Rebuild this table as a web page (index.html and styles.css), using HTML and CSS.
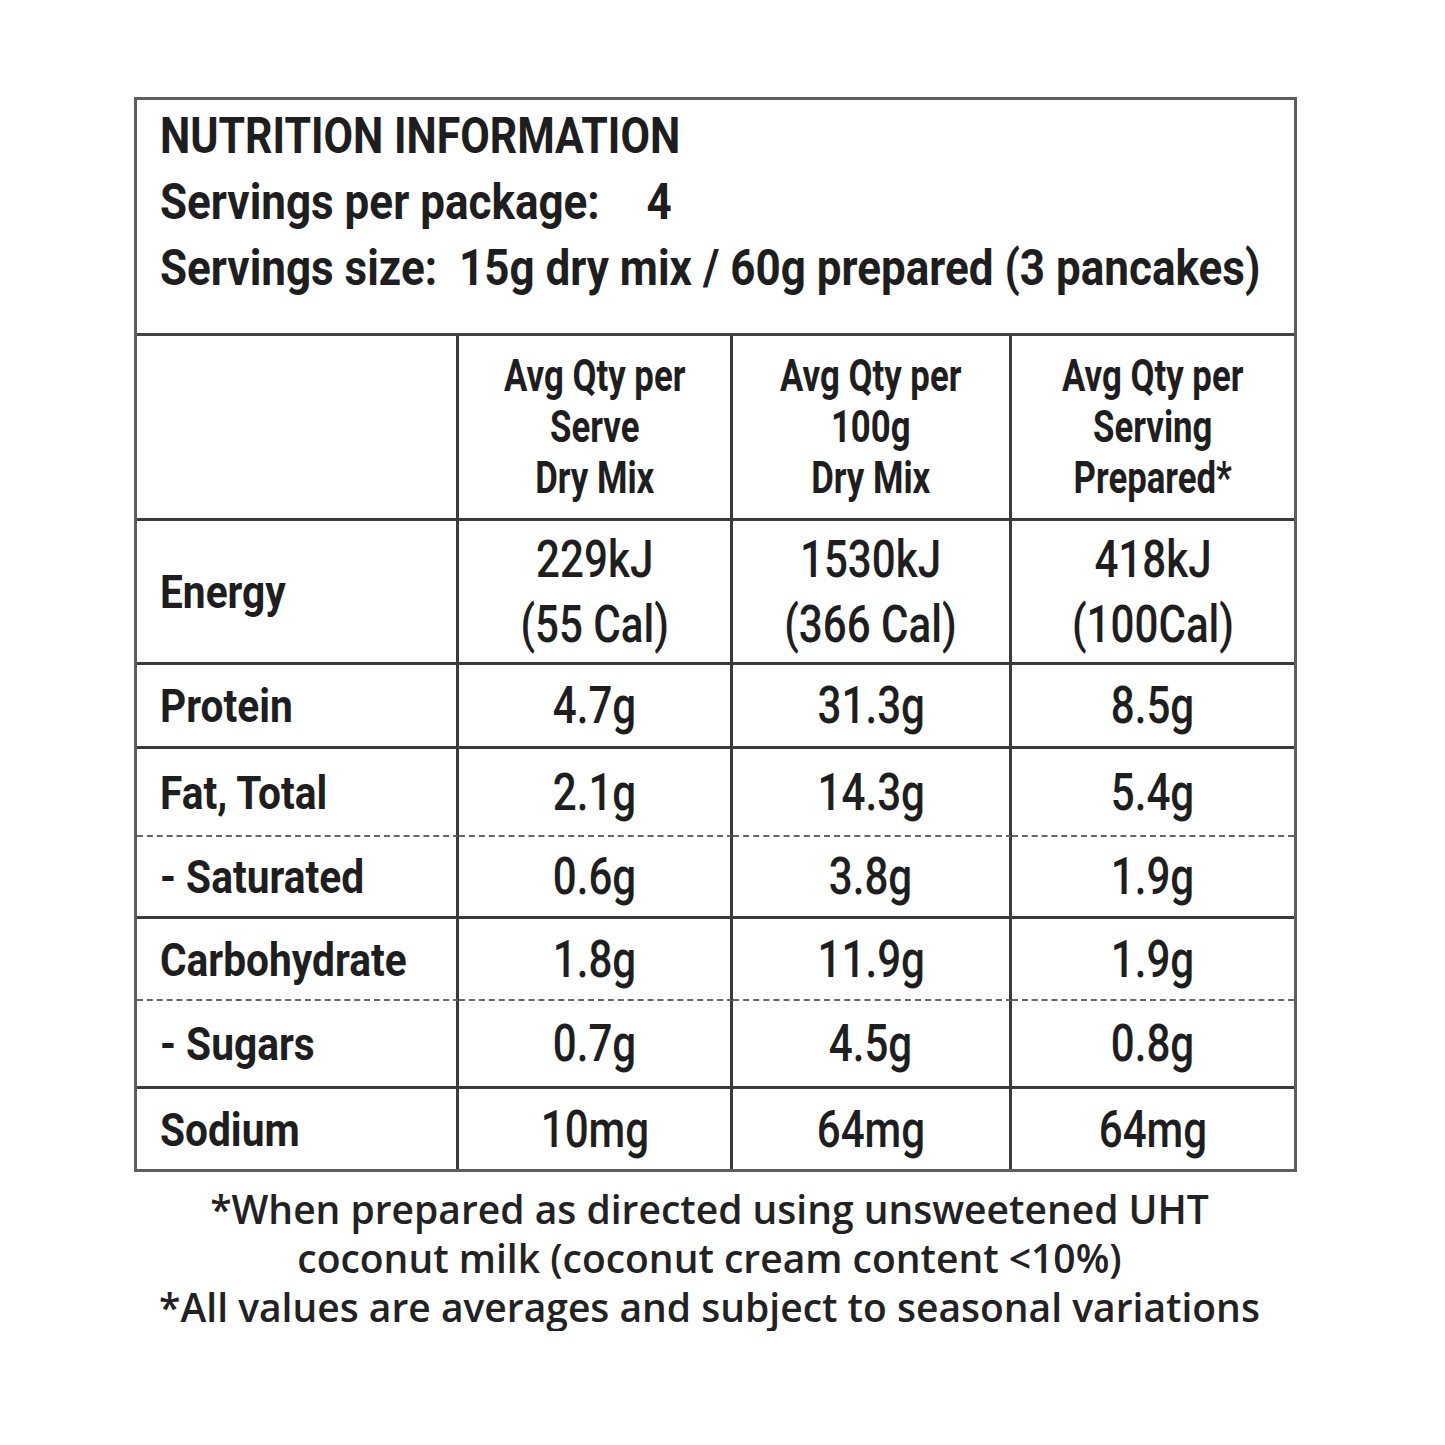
FILE: index.html
```html
<!DOCTYPE html>
<html lang="en">
<head>
<meta charset="utf-8">
<title>Nutrition Information</title>
<link rel="stylesheet" href="styles.css">
</head>
<body>
<div class="panel">
  <div class="box">
    <div class="head">
      <div class="line"><span class="t title">NUTRITION INFORMATION</span></div>
      <div class="line"><span class="t">Servings per package:<span class="num">4</span></span></div>
      <div class="line"><span class="t">Servings size:&nbsp; 15g dry mix / 60g prepared (3 pancakes)</span></div>
    </div>
    <div class="facts">
      <div class="cell label"></div>
      <div class="cell colhead"><span class="t">Avg Qty per<br>Serve<br>Dry Mix</span></div>
      <div class="cell colhead"><span class="t">Avg Qty per<br>100g<br>Dry Mix</span></div>
      <div class="cell colhead last"><span class="t">Avg Qty per<br>Serving<br>Prepared*</span></div>

      <div class="cell label"><span class="t">Energy</span></div>
      <div class="cell val two"><span class="t">229kJ<br>(55 Cal)</span></div>
      <div class="cell val two"><span class="t">1530kJ<br>(366 Cal)</span></div>
      <div class="cell val two last"><span class="t">418kJ<br>(100Cal)</span></div>

      <div class="cell label"><span class="t">Protein</span></div>
      <div class="cell val"><span class="t">4.7g</span></div>
      <div class="cell val"><span class="t">31.3g</span></div>
      <div class="cell val last"><span class="t">8.5g</span></div>

      <div class="cell label dash"><span class="t">Fat, Total</span></div>
      <div class="cell val dash"><span class="t">2.1g</span></div>
      <div class="cell val dash"><span class="t">14.3g</span></div>
      <div class="cell val dash last"><span class="t">5.4g</span></div>

      <div class="cell label"><span class="t">- Saturated</span></div>
      <div class="cell val"><span class="t">0.6g</span></div>
      <div class="cell val"><span class="t">3.8g</span></div>
      <div class="cell val last"><span class="t">1.9g</span></div>

      <div class="cell label dash"><span class="t">Carbohydrate</span></div>
      <div class="cell val dash"><span class="t">1.8g</span></div>
      <div class="cell val dash"><span class="t">11.9g</span></div>
      <div class="cell val dash last"><span class="t">1.9g</span></div>

      <div class="cell label"><span class="t">- Sugars</span></div>
      <div class="cell val"><span class="t">0.7g</span></div>
      <div class="cell val"><span class="t">4.5g</span></div>
      <div class="cell val last"><span class="t">0.8g</span></div>

      <div class="cell label end"><span class="t">Sodium</span></div>
      <div class="cell val end"><span class="t">10mg</span></div>
      <div class="cell val end"><span class="t">64mg</span></div>
      <div class="cell val end last"><span class="t">64mg</span></div>
    </div>
  </div>
  <div class="notes">
    <p>*When prepared as directed using unsweetened UHT</p>
    <p>coconut milk (coconut cream content &lt;10%)</p>
    <p>*All values are averages and subject to seasonal variations</p>
  </div>
</div>
</body>
</html>
```
FILE: styles.css
```css
* { box-sizing: border-box; }
html, body { margin: 0; padding: 0; background: #ffffff; }
body {
  color: #1e1e1e;
  font-family: Roboto, "Liberation Sans", sans-serif;
}
.panel {
  width: 1163px;
  margin: 97px 0 0 134px;
}
.box {
  border: 3px solid #5e5e5e;
}
.t {
  display: inline-block;
  white-space: nowrap;
}
.head {
  padding: 3px 0 32px 23px;
  border-bottom: 3px solid #444;
  font-weight: 700;
  font-size: 50px;
  line-height: 66px;
}
.head .line { height: 66px; }
.head .t {
  transform: scaleX(0.88);
  transform-origin: left center;
}
.head .t.title { transform: scaleX(0.857); }
.num { margin-left: 53px; }
.facts {
  display: grid;
  grid-template-columns: 322px 274px 279px 1fr;
  grid-template-rows: 185px 144px 84px 88px 82px 82px 88px 80px;
}
.cell {
  display: flex;
  align-items: center;
  border-right: 3px solid #3a3a3a;
  border-bottom: 3px solid #3a3a3a;
}
.cell.last { border-right: none; }
.cell.end { border-bottom: none; }
.cell.dash { border-bottom: 2px dashed #666; }
.label {
  padding-left: 23px;
  font-weight: 700;
  font-size: 47px;
}
.label .t {
  transform: scaleX(0.865);
  transform-origin: left center;
}
.colhead {
  justify-content: center;
  text-align: center;
  font-weight: 700;
  font-size: 44px;
  line-height: 51px;
}
.colhead .t {
  transform: scaleX(0.79);
  transform-origin: center center;
}
.val {
  justify-content: center;
  text-align: center;
  font-weight: 500;
  font-size: 52px;
}
.val .t {
  transform: scaleX(0.81);
  transform-origin: center center;
}
.val.two { line-height: 65px; }
.notes {
  margin-top: 12px;
  padding-right: 12px;
  text-align: center;
  font-family: "Open Sans", "DejaVu Sans", sans-serif;
  font-weight: 600;
  font-size: 39px;
  line-height: 49px;
  color: #222;
}
.notes p { margin: 0; }
```
